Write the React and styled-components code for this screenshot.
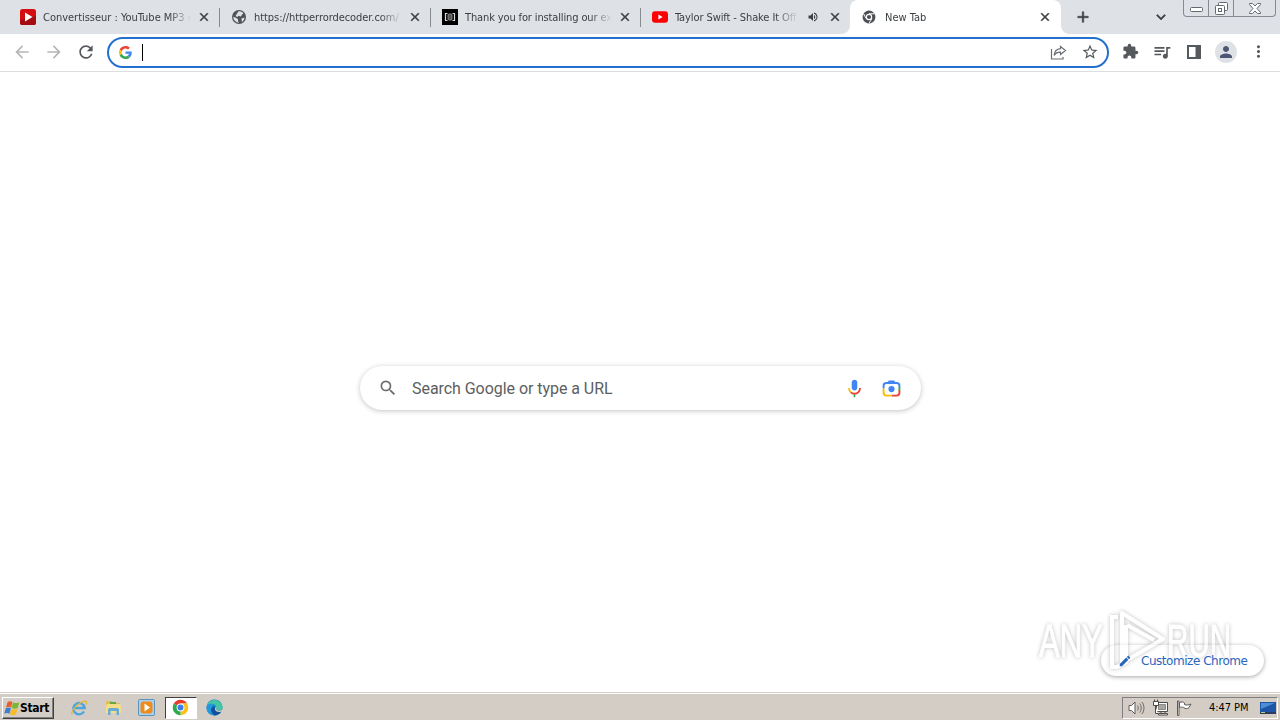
import React from 'react';
import styled, { createGlobalStyle } from 'styled-components';
import {
  MdArrowBack,
  MdArrowForward,
  MdRefresh,
  MdClose,
  MdAdd,
  MdKeyboardArrowDown,
  MdStarBorder,
  MdExtension,
  MdQueueMusic,
  MdPerson,
  MdMoreVert,
  MdSearch,
  MdEdit,
  MdVolumeUp,
} from 'react-icons/md';

const GlobalStyle = createGlobalStyle`
  * {
    box-sizing: border-box;
  }

  body {
    margin: 0;
    overflow: hidden;
    background: #fff;
  }

  svg {
    display: block;
    flex: none;
  }
`;

const Screen = styled.div`
  position: relative;
  width: 1280px;
  height: 720px;
  display: flex;
  flex-direction: column;
  font-family: "DejaVu Sans Condensed", "DejaVu Sans", sans-serif;
  font-size: 11px;
  color: #3c4043;
`;

/* ---------- tab strip ---------- */

const TabStrip = styled.div`
  height: 34px;
  display: flex;
  padding-left: 9px;
  background: #dee1e6;
`;

const Tab = styled.div`
  position: relative;
  width: ${(p) => p.$width || 210}px;
  height: 34px;
  display: flex;
  align-items: center;
  padding: 0 8px 0 11px;
  border-radius: 8px 8px 0 0;
  background: ${(p) => (p.$active ? '#fff' : 'transparent')};

  ${(p) =>
    p.$active &&
    `
    padding-left: 12px;
    padding-right: 9px;

    &::before,
    &::after {
      content: '';
      position: absolute;
      bottom: 0;
      width: 8px;
      height: 8px;
    }
    &::before {
      left: -8px;
      background: radial-gradient(circle at 0 0, transparent 7.5px, #fff 8px);
    }
    &::after {
      right: -8px;
      background: radial-gradient(circle at 100% 0, transparent 7.5px, #fff 8px);
    }
  `}
`;

const TabDivider = styled.div`
  width: 1px;
  height: 19px;
  margin-top: 8px;
  background: #868b90;
`;

const TabTitle = styled.div`
  flex: 1;
  margin-left: ${(p) => p.$gap || 7}px;
  padding-top: 1px;
  overflow: hidden;
  white-space: nowrap;
  line-height: 16px;
  color: #3c4043;
  letter-spacing: ${(p) => p.$spacing || 0}px;
  mask-image: linear-gradient(to right, #000 calc(100% - 22px), transparent);
`;

const CloseButton = styled.div`
  width: 14px;
  height: 14px;
  display: flex;
  margin-left: 6px;
  color: #3c4043;
  font-size: 14px;

  path:last-child {
    stroke: currentColor;
    stroke-width: 0.9px;
  }
`;

const StripButton = styled.div`
  display: flex;
  align-items: center;
  color: #3c4043;
  font-size: ${(p) => p.$size}px;
  margin-left: ${(p) => p.$gap}px;

  path:last-child {
    stroke: currentColor;
    stroke-width: 0.7px;
  }
`;

const WindowButtons = styled.div`
  width: 93px;
  height: 17px;
  display: flex;
  margin-left: 13px;
  border: 1px solid #868b92;
  border-top: 0;
  border-radius: 0 0 4px 4px;
`;

const WindowButton = styled.div`
  width: ${(p) => p.$width}px;
  display: flex;
  align-items: center;
  justify-content: center;
  padding-top: ${(p) => p.$drop || 0}px;

  & + & {
    border-left: 1px solid #868b92;
  }
`;

/* ---------- toolbar ---------- */

const Toolbar = styled.div`
  height: 38px;
  display: flex;
  align-items: center;
  padding: 0 0 1px 12px;
  border-bottom: 1px solid #dcdddf;
`;

const ToolButton = styled.div`
  width: 20px;
  height: 20px;
  display: flex;
  align-items: center;
  justify-content: center;
  margin-right: 12px;
  color: ${(p) => (p.$muted ? '#b5b7b9' : '#55595d')};
  font-size: ${(p) => p.$size || 20}px;
`;

const Omnibox = styled.div`
  width: 1002px;
  height: 31px;
  display: flex;
  align-items: center;
  margin-left: -1px;
  padding: 0 8px 0 10px;
  border: 2px solid #2470cf;
  border-radius: 16px;
`;

const Caret = styled.div`
  width: 1px;
  height: 17px;
  margin-left: 10px;
  background: #000;
`;

const OmniActions = styled.div`
  display: flex;
  align-items: center;
  gap: 14px;
  margin-left: auto;
  color: #55595d;
  font-size: 18px;
`;

const ToolActions = styled.div`
  display: flex;
  margin-left: 11px;
`;

const Avatar = styled.div`
  width: 22px;
  height: 22px;
  display: flex;
  align-items: center;
  justify-content: center;
  margin: -1px 11px 0 -1px;
  border-radius: 50%;
  background: #dee1e6;
  color: #4d5773;
  font-size: 18px;
`;

/* ---------- new tab page ---------- */

const Page = styled.main`
  flex: 1;
  display: flex;
  flex-direction: column;
  align-items: center;
`;

const SearchBox = styled.div`
  width: 561px;
  height: 44px;
  display: flex;
  align-items: center;
  margin: 294px 0 0 1px;
  padding: 0 20px 0 18px;
  border-radius: 22px;
  background: #fff;
  box-shadow: 0 1px 5px rgba(32, 33, 36, 0.27);
  color: #6a6d70;
  font-size: 20px;
`;

const SearchHint = styled.div`
  flex: 1;
  margin-left: 14px;
  padding-top: 2px;
  font: 16px/20px Roboto, sans-serif;
  letter-spacing: -0.05px;
  color: #5c5e61;
`;

const SearchIcons = styled.div`
  display: flex;
  gap: 18px;
`;

const CustomizeButton = styled.div`
  width: 163px;
  height: 31px;
  display: flex;
  align-items: center;
  align-self: flex-end;
  margin: auto 16px 16px 0;
  padding-left: 17px;
  border-radius: 16px;
  background: #fff;
  box-shadow: 0 1px 4px rgba(32, 33, 36, 0.4);
  color: #2866bd;
  font-size: 14px;

  svg,
  span {
    position: relative;
    z-index: 1;
  }
`;

const CustomizeLabel = styled.span`
  margin-left: 9px;
  font-family: "DejaVu Sans", sans-serif;
  font-size: 12px;
  letter-spacing: -0.46px;
`;

const Watermark = styled.div`
  position: absolute;
  left: 1039px;
  top: 607px;
  display: flex;
  align-items: center;
  opacity: 0.5;
  filter: drop-shadow(0 0 2px rgba(0, 0, 0, 0.5));
`;

const WatermarkText = styled.span`
  width: ${(p) => p.$width}px;
  font: 47px/68px "Liberation Sans", sans-serif;
  color: #fff;
  -webkit-text-stroke: 1px #fff;
  transform: scaleX(${(p) => p.$scale});
  transform-origin: 0 50%;
`;

/* ---------- taskbar ---------- */

const Taskbar = styled.footer`
  height: 28px;
  display: flex;
  align-items: center;
  padding: 2px 2px 0 2px;
  border-top: 1px solid #d4d0c8;
  box-shadow: inset 0 1px 0 #fff;
  background: #d4cdc5;
`;

const StartButton = styled.div`
  width: 52px;
  height: 22px;
  display: flex;
  align-items: center;
  padding-left: 1px;
  border: 1px solid;
  border-color: #fff #404040 #404040 #fff;
  box-shadow: inset -1px -1px 0 #808080;
  color: #000;
  font-weight: bold;
  font-size: 12px;
  letter-spacing: -0.3px;
`;

const QuickLaunch = styled.div`
  display: flex;
  margin-left: 9px;
`;

const TaskButton = styled.div`
  width: 32px;
  height: 22px;
  display: flex;
  align-items: center;
  justify-content: center;
  margin-right: 2px;
  padding-right: ${(p) => (p.$nudge ? 1 : 0)}px;
  border: 1px solid;
  border-color: ${(p) => (p.$pressed ? '#404040 #fff #fff #404040' : 'transparent')};
  background: ${(p) => (p.$pressed ? '#fff' : 'transparent')};
`;

const Tray = styled.div`
  width: 156px;
  height: 22px;
  display: flex;
  align-items: center;
  gap: 7px;
  margin-left: auto;
  padding-left: 5px;
  border: 1px solid;
  border-color: #808080 #fff #fff #808080;
`;

const Clock = styled.span`
  width: 41px;
  margin: 0 3px 0 9px;
  color: #000;
  white-space: nowrap;
  letter-spacing: -0.05px;
`;

const ConverterIcon = () => (
  <svg width="16" height="16" viewBox="0 0 16 16">
    <rect width="16" height="16" rx="2.500" fill="#d50d10" />
    <path d="M0 11l16-4v6.500A2.500 2.500 0 0 1 13.500 16h-11A2.500 2.500 0 0 1 0 13.500z" fill="#a50c10" />
    <path d="M5 3.500v9L12.500 8z" fill="#fff" />
  </svg>
);

const GlobeIcon = () => (
  <svg width="16" height="16" viewBox="0 0 16 16">
    <circle cx="8" cy="8" r="7" fill="#505458" />
    <path d="M7.500 2.300c2-.3 3.800.6 4.900 2.200L11 5.500l-1 2-2.500-.8-1 1.300-2-1z" fill="#dee1e6" />
    <path d="M2.300 7.800l3 1.200 1.700 1.200v2l1 1.500C4.800 13.600 2.200 11 2.300 7.800zM10.500 9.500l3-1c-.2 2-1.200 3.500-2.700 4.500z" fill="#dee1e6" />
  </svg>
);

const DecoderIcon = () => (
  <svg width="16" height="16" viewBox="0 0 16 16">
    <rect width="16" height="16" fill="#000" />
    <path d="M5.500 4.500H3.500v7h2M10.500 4.500h2v7h-2" fill="none" stroke="#d8d8d8" strokeWidth="1.200" />
    <rect x="6" y="5" width="4" height="6" rx="1" fill="#555" stroke="#999" strokeWidth=".8" />
  </svg>
);

const YoutubeIcon = () => (
  <svg width="16" height="16" viewBox="0 0 16 16">
    <rect y="2.300" width="16" height="11.400" rx="3" fill="#f00" />
    <path d="M6.400 5.600v4.800L10.600 8z" fill="#fff" />
  </svg>
);

const ChromeIcon = ({ size = 16, mono }) => {
  const colors = mono ? ['#4c5054', '#4c5054', '#4c5054'] : ['#e33b2e', '#fcc31e', '#2da94f'];
  return (
    <svg width={size} height={size} viewBox="0 0 24 24">
      <path d="M12 12L2.500 6.500A11 11 0 0 1 21.500 6.500H12z" fill={colors[0]} />
      <path d="M12 12V6.500h9.500A11 11 0 0 1 12 23z" fill={colors[1]} />
      <path d="M12 12v11A11 11 0 0 1 2.500 6.500z" fill={colors[2]} />
      {mono && (
        <path d="M12 6.500h9.500M7.200 14.800L2.500 6.500M16.800 14.800L12 23" stroke="#fff" strokeWidth="1.600" />
      )}
      <circle cx="12" cy="12" r="5.500" fill="#fff" />
      <circle cx="12" cy="12" r={mono ? 3.6 : 4.2} fill={mono ? '#4c5054' : '#3b7ded'} />
    </svg>
  );
};

const GoogleIcon = () => (
  <svg width="13" height="13" viewBox="0 0 48 48">
    <path fill="#ea4335" d="M24 9.500c3.540 0 6.710 1.220 9.210 3.600l6.850-6.850C35.900 2.380 30.470 0 24 0 14.620 0 6.510 5.380 2.560 13.220l7.980 6.190C12.430 13.720 17.740 9.500 24 9.500z" />
    <path fill="#4285f4" d="M46.980 24.550c0-1.570-.15-3.090-.38-4.550H24v9.020h12.940c-.58 2.960-2.260 5.480-4.780 7.180l7.730 6c4.510-4.180 7.090-10.360 7.090-17.650z" />
    <path fill="#fbbc05" d="M10.530 28.590c-.48-1.450-.76-2.990-.76-4.590s.27-3.140.76-4.590l-7.980-6.190C.92 16.460 0 20.120 0 24c0 3.880.92 7.540 2.560 10.780l7.970-6.190z" />
    <path fill="#34a853" d="M24 48c6.480 0 11.930-2.130 15.890-5.810l-7.730-6c-2.150 1.450-4.920 2.300-8.160 2.300-6.260 0-11.570-4.220-13.470-9.910l-7.980 6.190C6.510 42.620 14.620 48 24 48z" />
  </svg>
);

const ShareIcon = () => (
  <svg width="17" height="17" viewBox="0 0 17 17" fill="none" stroke="#6a6e72" strokeWidth="1.200">
    <path d="M1.500 5v10h11.500V13" />
    <path d="M10.500 2.500l5 4-5 4V8.200C7.500 8.100 5.600 9.200 4.200 11.400 4.500 7.700 6.500 5 10.500 4.700z" />
  </svg>
);

const SidePanelIcon = () => (
  <svg width="14" height="14" viewBox="0 0 14 14">
    <path d="M0 0h14v14H0zM2 2v10h6.500V2z" fill="#55595d" fillRule="evenodd" />
  </svg>
);

const MicIcon = () => (
  <svg width="19" height="19" viewBox="0 0 24 24">
    <path fill="#4285f4" d="M12 14.500c1.900 0 3.500-1.500 3.500-3.500V4.500C15.500 2.600 13.900 1 12 1S8.500 2.600 8.500 4.500V11c0 2 1.600 3.500 3.500 3.500z" />
    <path fill="#34a853" d="M11 18h2v5h-2z" />
    <path fill="none" stroke="#fbbc04" strokeWidth="2.200" d="M5 11.500c0 2.200.9 4 2.200 5.400" />
    <path fill="none" stroke="#ea4335" strokeWidth="2.200" d="M7.200 16.900c1.300 1.100 2.800 1.700 4.800 1.700 3.900 0 7-3.100 7-7.100" />
  </svg>
);

const LensIcon = () => (
  <svg width="19" height="19" viewBox="0 0 24 24" fill="none" strokeWidth="2.400">
    <path stroke="#4285f4" d="M2 12V8.500C2 6.500 3.500 5 5.500 5h13C20.500 5 22 6.500 22 8.500V10" />
    <path fill="#4285f4" d="M7 4.500L8.500 2h7L17 4.500z" />
    <path stroke="#ea4335" d="M22 14v3.500c0 2-1.500 3.500-3.500 3.500H12" />
    <path stroke="#fbbc04" d="M12 21H5.500C3.500 21 2 19.500 2 17.500V12" />
    <path stroke="#34a853" d="M22 10v4.500" />
    <circle cx="12" cy="12.700" r="3.900" fill="#4285f4" />
  </svg>
);

const WindowsIcon = () => (
  <svg width="16" height="16" viewBox="0 0 16 16">
    <path d="M3.500 2.200C5 1 6.800 1.100 8.500 2L7.100 7.500C5.500 6.500 3.800 6.500 2 7.500z" fill="#e9602a" />
    <path d="M9 2.400c1.800 1 3.900.9 6.300-.2L13.700 8c-1.900 1-4 1.100-6.100 0z" fill="#7bb735" />
    <path d="M1.800 8.200c1.800-1 3.500-1 5.100 0L5.500 13.800C3.800 12.800 2 12.800.2 13.800z" fill="#3c7fd0" />
    <path d="M7.400 8.700c2 1.100 4 1 6.100 0L12 14.400c-1.900 1-3.900 1-6-.1z" fill="#f7bd28" />
  </svg>
);

const ExplorerIcon = () => (
  <svg width="18" height="18" viewBox="0 0 18 18" fill="none">
    <path d="M14 12.500A5.700 5.700 0 1 1 14.700 9H4" stroke="#4aa5de" strokeWidth="2.400" />
    <path d="M2.200 15.500C-.5 13 9 3 15 2.200c2.200-.2 1.800 2 .8 3.500" stroke="#e2b63e" strokeWidth="1.300" />
  </svg>
);

const FolderIcon = () => (
  <svg width="17" height="17" viewBox="0 0 17 17">
    <path d="M1 3l1-1h5l1 2h7v10H1z" fill="#e0bd52" />
    <path d="M2 5h13l1 2v7H1V7z" fill="#f3dd88" />
    <path d="M5 3h6v2H5z" fill="#63a845" />
    <path d="M3 16v-5c0-1.500 1-2 2-2h7c1 0 2 .5 2 2v5h-2.500v-4h-6v4z" fill="#68acd6" />
  </svg>
);

const PlayerIcon = () => (
  <svg width="17" height="17" viewBox="0 0 17 17">
    <rect x=".5" y=".5" width="16" height="16" rx="1" fill="#a9d0ec" stroke="#5b92bb" />
    <rect x="2.500" y="2.500" width="12" height="12" rx="3" fill="#ee8b1c" />
    <path d="M6.500 4.500v8l5.500-4z" fill="#fff" />
  </svg>
);

const EdgeIcon = () => (
  <svg width="17" height="17" viewBox="0 0 17 17">
    <circle cx="8.500" cy="8.500" r="8" fill="#1679c9" />
    <path d="M.8 7C2 1.500 8 .2 11.500 1.500c4 1.500 6 5.500 4.500 8.500-1 1.800-4.500 2-6 .5 1-1.500.5-4-2-5C5.500 4.500 2.500 5 .8 7z" fill="#43c7a2" />
    <path d="M.8 7C3 3.500 8 4 9.300 6.500 6 6 4 9 5.500 12.500c.5 1.500 1.700 2.800 3 3.800C3 16.500-.5 12 .8 7z" fill="#2299dc" />
    <path d="M9.500 7.500c-2 1.500-1 5.500 5.500 5-1.500 2.500-4.500 4-6.500 4C3.500 13 4.500 7.500 9.500 7.500z" fill="#174e99" />
    <path d="M10 7.500c.7 1.200.5 2.200 0 3 1.500 1.500 4.500 1.500 7 0v2c-4.500 1.200-8 0-8-2.500 0-1 .3-1.800 1-2.500z" fill="#d4cdc5" />
  </svg>
);

const SpeakerIcon = () => (
  <svg width="17" height="16" viewBox="0 0 17 16" fill="none" stroke="#5c5a57">
    <path d="M1 5.500h2.500L7 2v12l-3.500-3.500H1z" fill="#fff" />
    <path d="M9.500 5.500c1 1.500 1 3.500 0 5M11.700 3.500c2 2.700 2 6.300 0 9M14 2c2.600 3.500 2.600 8.500 0 12" strokeWidth=".9" />
  </svg>
);

const NetworkIcon = () => (
  <svg width="17" height="17" viewBox="0 0 17 17" stroke="#4e4c49">
    <path d="M4.500 3.500h11v9h-11z" fill="#fff" />
    <path d="M6.500 5.500h7v5h-7z" fill="#a9a6a1" stroke="#8d8a86" />
    <path d="M6.500 14.500h9v1.500h-9zM9 12.500v2M13 12.500v2" fill="#fff" />
    <path d="M1.500 2.500h5v4h-5zM2.500 2.500V.5M5.500 2.500V.5M3.500 6.500v8H6" fill="#fff" />
  </svg>
);

const FlagIcon = () => (
  <svg width="17" height="16" viewBox="0 0 17 16" stroke="#5c5a57">
    <path d="M1.500 1h1.500v14.500H1.500z" fill="#fff" />
    <path d="M3.500 2.500c2-1 4-.5 5 .5v1.500c2 1 4 .5 6.500-.5l-2 3.500c-1.500 1.500-3.500 1.500-5.500 0-1.300-.5-2.600-.5-4 0z" fill="#fff" />
  </svg>
);

const DesktopIcon = () => (
  <svg width="16" height="14" viewBox="0 0 16 14">
    <path d="M0 1h16v10H0z" fill="#1c54a6" />
    <path d="M1 2h14L1 8z" fill="#4b8ed4" />
    <path d="M0 11h16v2H0z" fill="#293e5e" />
    <path d="M1 11.500h4" stroke="#b6d36a" />
  </svg>
);

const PlayMark = () => (
  <svg width="60" height="68" viewBox="0 0 60 68" fill="none" stroke="#fff" strokeWidth="4">
    <path d="M15 6v50L56 32z" strokeLinejoin="round" />
    <path d="M20 18l27 15" />
    <path d="M11 10H5v50h5l9-5V18" />
  </svg>
);

const tabs = [
  { icon: <ConverterIcon />, title: 'Convertisseur : YouTube MP3 et', spacing: -0.02 },
  { icon: <GlobeIcon />, title: 'https://httperrordecoder.com/', spacing: -0.06 },
  { icon: <DecoderIcon />, title: 'Thank you for installing our exte', spacing: -0.13, width: 209 },
  { icon: <YoutubeIcon />, title: 'Taylor Swift - Shake It Off', spacing: -0.1, audio: true, width: 209 },
];

const Tabs = () => (
  <TabStrip>
    {tabs.map((tab, i) => (
      <React.Fragment key={tab.title}>
        <Tab $width={tab.width}>
          {tab.icon}
          <TabTitle $spacing={tab.spacing}>{tab.title}</TabTitle>
          {tab.audio && <MdVolumeUp size={12} style={{ marginLeft: 9, marginRight: 3 }} />}
          <CloseButton><MdClose /></CloseButton>
        </Tab>
        {i < tabs.length - 1 && <TabDivider />}
      </React.Fragment>
    ))}
    <Tab $active $width={211}>
      <ChromeIcon size={14} mono />
      <TabTitle $gap={9}>New Tab</TabTitle>
      <CloseButton><MdClose /></CloseButton>
    </Tab>
    <StripButton $size={18} $gap={13}><MdAdd /></StripButton>
    <StripButton $size={18} $gap={60}><MdKeyboardArrowDown /></StripButton>
    <WindowButtons>
      <WindowButton $width={24} $drop={3}>
        <svg width="13" height="5" viewBox="0 0 13 5">
          <rect x=".5" y=".5" width="12" height="4" rx="1" fill="#fff" stroke="#65696f" />
        </svg>
      </WindowButton>
      <WindowButton $width={25}>
        <svg width="13" height="13" viewBox="0 0 13 13" fill="#fff" stroke="#65696f">
          <rect x="3.500" y=".5" width="9" height="8" rx="1" />
          <rect x=".5" y="3.500" width="9" height="9" rx="1" />
          <rect x="3.500" y="6.500" width="3" height="3" />
        </svg>
      </WindowButton>
      <WindowButton $width={42}>
        <svg width="12" height="11" viewBox="0 0 12 11">
          <path d="M.5.500h3L6 3l2.500-2.500h3v1L8 5.500l3.500 4v1h-3L6 8l-2.500 2.500h-3v-1L4 5.500.5 1.500z" fill="#fff" stroke="#65696f" />
        </svg>
      </WindowButton>
    </WindowButtons>
  </TabStrip>
);

const BrowserToolbar = () => (
  <Toolbar>
    <ToolButton $muted><MdArrowBack /></ToolButton>
    <ToolButton $muted><MdArrowForward /></ToolButton>
    <ToolButton><MdRefresh /></ToolButton>
    <Omnibox>
      <GoogleIcon />
      <Caret />
      <OmniActions>
        <ShareIcon />
        <MdStarBorder />
      </OmniActions>
    </Omnibox>
    <ToolActions>
      <ToolButton $size={17}><MdExtension /></ToolButton>
      <ToolButton><MdQueueMusic /></ToolButton>
      <ToolButton><SidePanelIcon /></ToolButton>
      <Avatar><MdPerson /></Avatar>
      <ToolButton $size={19}><MdMoreVert /></ToolButton>
    </ToolActions>
  </Toolbar>
);

const App = () => (
  <>
    <GlobalStyle />
    <Screen>
      <Tabs />
      <BrowserToolbar />
      <Page>
        <SearchBox>
          <MdSearch />
          <SearchHint>Search Google or type a URL</SearchHint>
          <SearchIcons>
            <MicIcon />
            <LensIcon />
          </SearchIcons>
        </SearchBox>
        <CustomizeButton>
          <MdEdit />
          <CustomizeLabel>Customize Chrome</CustomizeLabel>
        </CustomizeButton>
      </Page>
      <Taskbar>
        <StartButton><WindowsIcon />Start</StartButton>
        <QuickLaunch>
          <TaskButton><ExplorerIcon /></TaskButton>
          <TaskButton><FolderIcon /></TaskButton>
          <TaskButton $nudge><PlayerIcon /></TaskButton>
          <TaskButton $pressed $nudge><ChromeIcon size={17} /></TaskButton>
          <TaskButton $nudge><EdgeIcon /></TaskButton>
        </QuickLaunch>
        <Tray>
          <SpeakerIcon />
          <NetworkIcon />
          <FlagIcon />
          <Clock>4:47 PM</Clock>
          <DesktopIcon />
        </Tray>
      </Taskbar>
      <Watermark>
        <WatermarkText $width={68} $scale={0.66}>ANY</WatermarkText>
        <PlayMark />
        <WatermarkText $width={66} $scale={0.63}>RUN</WatermarkText>
      </Watermark>
    </Screen>
  </>
);

export default App;
